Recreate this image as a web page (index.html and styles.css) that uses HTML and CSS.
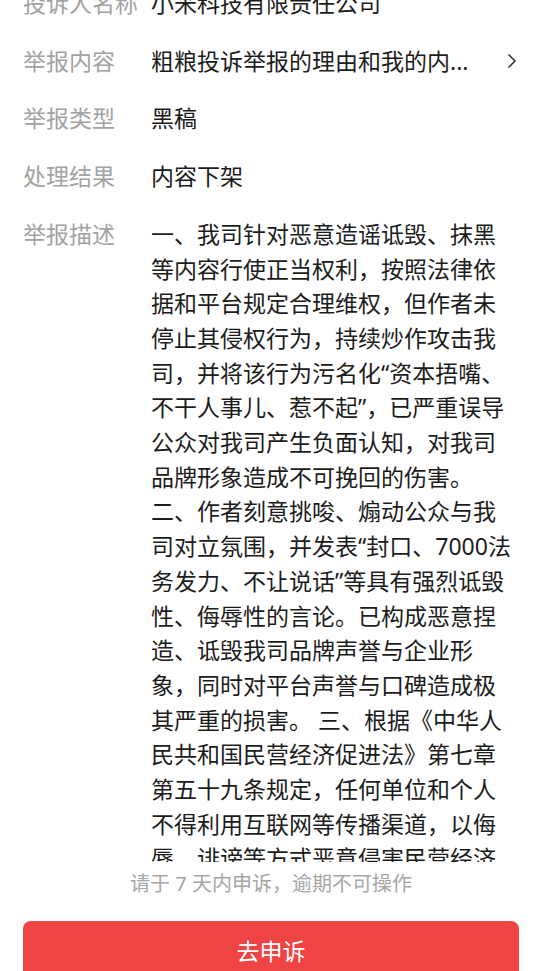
FILE: index.html
```html
<!DOCTYPE html>
<html lang="zh-CN">
<head>
<meta charset="utf-8">
<title>举报详情</title>
<link rel="stylesheet" href="styles.css">
</head>
<body>
<div class="page">
  <div class="scroll">
    <div class="list">
      <div class="row">
        <div class="label">投诉人名称</div>
        <div class="value">小米科技有限责任公司</div>
      </div>
      <div class="row">
        <div class="label">举报内容</div>
        <div class="value link">
          <span class="link-text">粗粮投诉举报的理由和我的内...</span>
          <svg class="chev" width="12" height="18" viewBox="0 0 12 18"><polyline points="3,3 9,9 3,15" fill="none" stroke="#333" stroke-width="1.6" stroke-linecap="round" stroke-linejoin="round"/></svg>
        </div>
      </div>
      <div class="row">
        <div class="label">举报类型</div>
        <div class="value">黑稿</div>
      </div>
      <div class="row">
        <div class="label">处理结果</div>
        <div class="value">内容下架</div>
      </div>
      <div class="row">
        <div class="label">举报描述</div>
        <div class="value desc">
          <span class="ln">一、我司针对恶意造谣诋毁、抹黑</span>
          <span class="ln">等内容行使正当权利，按照法律依</span>
          <span class="ln">据和平台规定合理维权，但作者未</span>
          <span class="ln">停止其侵权行为，持续炒作攻击我</span>
          <span class="ln">司，并将该行为污名化“资本捂嘴、</span>
          <span class="ln">不干人事儿、惹不起”，已严重误导</span>
          <span class="ln">公众对我司产生负面认知，对我司</span>
          <span class="ln">品牌形象造成不可挽回的伤害。</span>
          <span class="ln">二、作者刻意挑唆、煽动公众与我</span>
          <span class="ln">司对立氛围，并发表“封口、7000法</span>
          <span class="ln">务发力、不让说话”等具有强烈诋毁</span>
          <span class="ln">性、侮辱性的言论。已构成恶意捏</span>
          <span class="ln">造、诋毁我司品牌声誉与企业形</span>
          <span class="ln">象，同时对平台声誉与口碑造成极</span>
          <span class="ln">其严重的损害。 三、根据《中华人</span>
          <span class="ln">民共和国民营经济促进法》第七章</span>
          <span class="ln">第五十九条规定，任何单位和个人</span>
          <span class="ln">不得利用互联网等传播渠道，以侮</span>
          <span class="ln">辱、诽谤等方式恶意侵害民营经济</span>
          <span class="ln">组织及其经营者的合法权益。</span>
        </div>
      </div>
    </div>
  </div>
  <div class="hint">请于 7 天内申诉，逾期不可操作</div>
  <div class="btn">去申诉</div>
</div>
</body>
</html>
```
FILE: styles.css
```css
html, body {
  margin: 0;
  padding: 0;
  background: #ffffff;
}
body {
  font-family: "Noto Sans", "Noto Sans CJK SC", sans-serif;
  color: #1c1c1c;
}
.page {
  width: 542px;
  height: 971px;
  overflow: hidden;
  display: flex;
  flex-direction: column;
}
.scroll {
  flex: none;
  height: 862px;
  overflow: hidden;
  padding: 0 23px;
}
.list {
  margin-top: -14px;
  display: flex;
  flex-direction: column;
  gap: 23px;
}
.row {
  display: grid;
  grid-template-columns: 128px 1fr;
  font-size: 23px;
  line-height: 34.7px;
}
.label {
  color: #a2a2a2;
  white-space: nowrap;
}
.value {
  color: #1c1c1c;
  white-space: nowrap;
}
.link {
  display: flex;
  align-items: center;
  justify-content: space-between;
}
.chev {
  margin-right: 1px;
}
.desc {
  display: flex;
  flex-direction: column;
}
.ln {
  display: block;
  white-space: nowrap;
}
.hint {
  margin-top: 8px;
  text-align: center;
  font-size: 20px;
  line-height: 28px;
  color: #a6a6a6;
  white-space: pre;
}
.btn {
  margin: 23px 23px 0;
  height: 62px;
  line-height: 60px;
  flex: none;
  border-radius: 8px 8px 0 0;
  background: #ef4444;
  color: #ffffff;
  text-align: center;
  font-size: 23px;
}
```
